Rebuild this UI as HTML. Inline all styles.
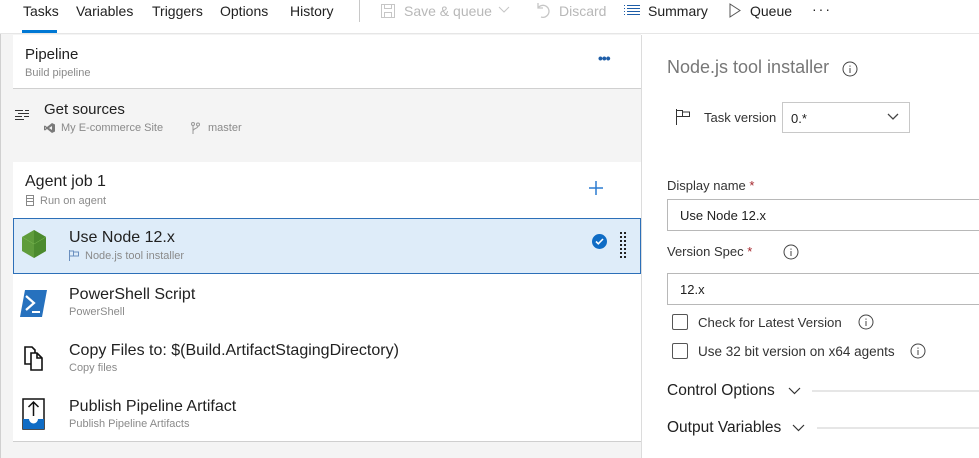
<!DOCTYPE html>
<html><head><meta charset="utf-8"><style>
*{box-sizing:border-box;margin:0;padding:0}
body{width:979px;height:458px;overflow:hidden;background:#fff;font-family:"Segoe UI","Liberation Sans",sans-serif;color:#212121;position:relative}
.a{position:absolute;white-space:nowrap}
.t{font-size:14px}
.h{font-size:16px}
.s{font-size:11px;color:#8a8a8a}
.g{color:#b8b8b8}
</style></head><body>
<div class="a" style="left:0;top:0;width:641px;height:458px;background:#f4f4f4;border-left:1px solid #d0d0d0"></div>
<div class="a" style="left:0;top:0;width:979px;height:34px;background:#fff;border-bottom:1px solid #e6e6e6"></div>
<div class="a t" style="left:23px;top:3px">Tasks</div>
<div class="a" style="left:22px;top:30px;width:35px;height:3px;background:#0078d4"></div>
<div class="a t" style="left:76px;top:3px">Variables</div>
<div class="a t" style="left:152px;top:3px">Triggers</div>
<div class="a t" style="left:220px;top:3px">Options</div>
<div class="a t" style="left:290px;top:3px">History</div>
<div class="a" style="left:359px;top:0;width:1px;height:22px;background:#c8c8c8"></div>
<svg class="a" style="left:380px;top:3px" width="16" height="16" viewBox="0 0 16 16" fill="none" stroke="#c6c6c6"><rect x="1.5" y="1.5" width="13" height="13"/><rect x="4.5" y="1.5" width="7" height="4"/><rect x="4.5" y="9.5" width="7" height="5"/></svg>
<div class="a t g" style="left:404px;top:3px">Save &amp; queue</div>
<svg class="a" style="left:498px;top:6px" width="12" height="8" viewBox="0 0 12 8" fill="none" stroke="#c6c6c6"><path d="M1 1l5 5 5-5"/></svg>
<svg class="a" style="left:535px;top:2px" width="16" height="16" viewBox="0 0 16 16" fill="none" stroke="#c6c6c6" stroke-width="1.3"><path d="M3 1v5h5M3 6a6 6 0 1 1 3 9"/></svg>
<div class="a t g" style="left:559px;top:3px">Discard</div>
<svg class="a" style="left:624px;top:5px" width="16" height="11" viewBox="0 0 16 11" stroke="#1f5ea8"><path d="M0 .5h1M3 .5h13M0 3.5h1M3 3.5h13M0 6.5h1M3 6.5h13M0 9.5h1M3 9.5h13"/></svg>
<div class="a t" style="left:648px;top:3px">Summary</div>
<svg class="a" style="left:729px;top:3px" width="12" height="15" viewBox="0 0 12 15" fill="none" stroke="#555"><path d="M1 1l10 6.5L1 14z"/></svg>
<div class="a t" style="left:750px;top:3px">Queue</div>
<div class="a t" style="left:812px;top:1px;letter-spacing:2px">···</div>
<div class="a" style="left:641px;top:35px;width:1px;height:423px;background:#dcdcdc"></div>
<div class="a" style="left:13px;top:35px;width:628px;height:54px;background:#fff;border-bottom:1px solid #d0d0d0"></div>
<div class="a" style="left:25px;top:46px;font-size:15px">Pipeline</div>
<div class="a s" style="left:25px;top:67px">Build pipeline</div>
<div class="a" style="left:598px;top:50px;color:#1f5ea8;font-size:14px;font-weight:bold;letter-spacing:-1px">•••</div>
<svg class="a" style="left:14px;top:109px" width="16" height="12" viewBox="0 0 16 12" stroke="#333"><path d="M1 1.5h8M11 1.5h4M4 4.5h11M1 7.5h7M10 7.5h5M1 10.5h9"/></svg>
<div class="a" style="left:44px;top:101px;font-size:15px">Get sources</div>
<svg class="a" style="left:44px;top:123px" width="11" height="10" viewBox="0 0 11 10" fill="#7a7a7a"><path d="M8 0l3 1.5v7L8 10 3 6 1 7.5 0 7V3l1-.5L3 4zM8 3L5 5l3 2zM1 4v2l1-1z"/></svg>
<div class="a s" style="left:61px;top:122px">My E-commerce Site</div>
<svg class="a" style="left:191px;top:122px" width="9" height="12" viewBox="0 0 9 12" fill="none" stroke="#999"><circle cx="2" cy="2" r="1.5"/><circle cx="7" cy="2.5" r="1.5"/><path d="M2 3.5V12M7 4c0 3-5 2-5 5"/></svg>
<div class="a s" style="left:208px;top:122px">master</div>
<div class="a" style="left:13px;top:162px;width:628px;height:280px;background:#fff;border-bottom:1px solid #cfcfcf"></div>
<div class="a h" style="left:25px;top:173px">Agent job 1</div>
<svg class="a" style="left:26px;top:195px" width="8" height="11" viewBox="0 0 8 11" fill="none" stroke="#888"><rect x=".5" y=".5" width="7" height="10"/><path d="M.5 3.5h7M.5 6.5h7"/></svg>
<div class="a s" style="left:40px;top:195px">Run on agent</div>
<svg class="a" style="left:588px;top:180px" width="16" height="16" stroke="#2b7bd0" stroke-width="1.5"><path d="M8 1v14M1 8h14"/></svg>
<div class="a" style="left:13px;top:218px;width:628px;height:56px;background:#deecf9;border:1px solid #2c6fb8"></div>
<svg class="a" style="left:22px;top:230px" width="24" height="28" viewBox="0 0 24 28"><path d="M12 0l12 7v14l-12 7L0 21V7z" fill="#5f9c3c"/><path d="M12 0l12 7v14l-12 7z" fill="#4b8a2e"/><path d="M0 7l12 7 12-7" fill="none" stroke="#7cbb55" stroke-width=".5"/></svg>
<div class="a h" style="left:69px;top:229px">Use Node 12.x</div>
<svg class="a" style="left:69px;top:250px" width="10" height="11" viewBox="0 0 10 11" fill="none" stroke="#6a8fbf"><path d="M.5 0v11M.5 1h4v5H.5M4.5 2h5v4h-5"/></svg>
<div class="a s" style="left:85px;top:250px">Node.js tool installer</div>
<div class="a" style="left:592px;top:234px;width:15px;height:15px;border-radius:50%;background:#0f6cc5"></div>
<svg class="a" style="left:595px;top:237px" width="9" height="9" viewBox="0 0 9 9" fill="none" stroke="#fff" stroke-width="1.6"><path d="M1 4.5l2.3 2.3L8 2"/></svg>
<svg class="a" style="left:619px;top:231px" width="8" height="28" fill="#222"><g><rect x="1" y="1" width="2" height="2"/><rect x="5" y="1" width="2" height="2"/><rect x="1" y="5" width="2" height="2"/><rect x="5" y="5" width="2" height="2"/><rect x="1" y="9" width="2" height="2"/><rect x="5" y="9" width="2" height="2"/><rect x="1" y="13" width="2" height="2"/><rect x="5" y="13" width="2" height="2"/><rect x="1" y="17" width="2" height="2"/><rect x="5" y="17" width="2" height="2"/><rect x="1" y="21" width="2" height="2"/><rect x="5" y="21" width="2" height="2"/><rect x="1" y="25" width="2" height="2"/><rect x="5" y="25" width="2" height="2"/></g></svg>
<svg class="a" style="left:20px;top:290px" width="27" height="27" viewBox="0 0 27 27"><path d="M5 0h22l-5 27H0z" fill="#2671be"/><path d="M6 6l8 7-8 7" fill="none" stroke="#fff" stroke-width="2.2"/><path d="M12 22h8" stroke="#fff" stroke-width="2"/></svg>
<div class="a h" style="left:69px;top:286px">PowerShell Script</div>
<div class="a s" style="left:69px;top:306px">PowerShell</div>
<svg class="a" style="left:24px;top:346px" width="19" height="25" viewBox="0 0 19 25" fill="#fff" stroke="#111" stroke-width="1.6"><path d="M1 1h7l3 3v14H1z"/><path d="M7 7h6l5 5v12H7z"/><path d="M13 7v5h5" fill="none"/></svg>
<div class="a h" style="left:69px;top:342px">Copy Files to: $(Build.ArtifactStagingDirectory)</div>
<div class="a s" style="left:69px;top:362px">Copy files</div>
<svg class="a" style="left:22px;top:398px" width="23" height="32" viewBox="0 0 23 32"><rect x="1" y="1" width="21" height="30" fill="#fff" stroke="#111" stroke-width="1.5"/><path d="M1 21h6a4.5 4.5 0 0 0 9 0h6v10H1z" fill="#0f6cc5"/><path d="M11.5 18V4M6.5 9l5-5 5 5" fill="none" stroke="#111" stroke-width="1.5"/></svg>
<div class="a h" style="left:69px;top:398px">Publish Pipeline Artifact</div>
<div class="a s" style="left:69px;top:418px">Publish Pipeline Artifacts</div>
<div class="a" style="left:667px;top:57px;font-size:18px;color:#777">Node.js tool installer</div>
<svg class="a" style="left:842px;top:61px" width="16" height="16" fill="none" stroke="#444"><circle cx="8" cy="8" r="7"/><path d="M8 7v5M8 4.5v1.2"/></svg>
<svg class="a" style="left:676px;top:109px" width="14" height="16" viewBox="0 0 14 16" fill="none" stroke="#333"><path d="M.5 0v16M.5 1.5h6v6H.5M6.5 3h7v4.5h-7"/></svg>
<div class="a" style="left:704px;top:110px;font-size:13px;color:#333">Task version</div>
<div class="a" style="left:782px;top:102px;width:128px;height:31px;border:1px solid #c8c8c8"></div>
<div class="a" style="left:791px;top:111px;font-size:13px">0.*</div>
<svg class="a" style="left:887px;top:113px" width="12" height="8" fill="none" stroke="#444" stroke-width="1.3"><path d="M1 1l5 5 5-5"/></svg>
<div class="a" style="left:667px;top:178px;font-size:13px;color:#333">Display name <span style="color:#a4262c">*</span></div>
<div class="a" style="left:667px;top:199px;width:320px;height:32px;border:1px solid #b8b8b8"></div>
<div class="a" style="left:680px;top:208px;font-size:13px">Use Node 12.x</div>
<div class="a" style="left:667px;top:244px;font-size:13px;color:#333">Version Spec <span style="color:#a4262c">*</span></div>
<svg class="a" style="left:783px;top:244px" width="16" height="16" fill="none" stroke="#444"><circle cx="8" cy="8" r="7"/><path d="M8 7v5M8 4.5v1.2"/></svg>
<div class="a" style="left:667px;top:273px;width:320px;height:32px;border:1px solid #b8b8b8"></div>
<div class="a" style="left:680px;top:282px;font-size:13px">12.x</div>
<div class="a" style="left:672px;top:314px;width:16px;height:16px;border:1px solid #555;border-radius:2px"></div>
<div class="a" style="left:698px;top:315px;font-size:13.2px;color:#333">Check for Latest Version</div>
<svg class="a" style="left:858px;top:314px" width="16" height="16" fill="none" stroke="#444"><circle cx="8" cy="8" r="7"/><path d="M8 7v5M8 4.5v1.2"/></svg>
<div class="a" style="left:672px;top:343px;width:16px;height:16px;border:1px solid #555;border-radius:2px"></div>
<div class="a" style="left:698px;top:344px;font-size:13.5px;color:#333">Use 32 bit version on x64 agents</div>
<svg class="a" style="left:910px;top:343px" width="16" height="16" fill="none" stroke="#444"><circle cx="8" cy="8" r="7"/><path d="M8 7v5M8 4.5v1.2"/></svg>
<div class="a" style="left:667px;top:382px;font-size:15.5px">Control Options</div>
<svg class="a" style="left:788px;top:387px" width="13" height="8" fill="none" stroke="#333" stroke-width="1.2"><path d="M1 1l5.5 5.5L12 1"/></svg>
<div class="a" style="left:812px;top:390px;width:167px;height:2px;background:#e6e6e6"></div>
<div class="a" style="left:667px;top:419px;font-size:15.5px">Output Variables</div>
<svg class="a" style="left:792px;top:424px" width="13" height="8" fill="none" stroke="#333" stroke-width="1.2"><path d="M1 1l5.5 5.5L12 1"/></svg>
<div class="a" style="left:817px;top:427px;width:162px;height:2px;background:#e6e6e6"></div>
</body></html>
